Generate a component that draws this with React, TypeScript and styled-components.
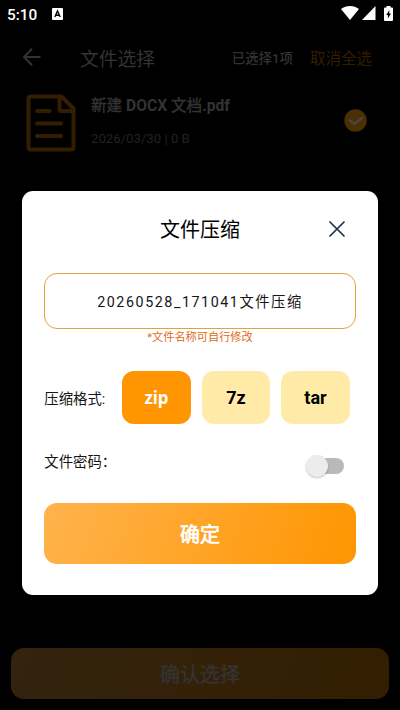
import React from 'react';
import styled, { createGlobalStyle } from 'styled-components';

const Global = createGlobalStyle`
  * { box-sizing: border-box; }
  body { margin: 0; background: #000; }
  button { border: 0; padding: 0; background: none; font: inherit; color: inherit; cursor: pointer; }
`;

const Screen = styled.div`
  position: relative;
  display: flex;
  flex-direction: column;
  width: 400px;
  height: 710px;
  overflow: hidden;
  background: #000;
  font-family: Roboto, 'Noto Sans CJK SC', sans-serif;
  white-space: nowrap;
`;

const StatusBar = styled.div`
  display: flex;
  align-items: center;
  height: 28px;
  padding: 0 7px;
  color: #fff;
`;

const Clock = styled.span`
  width: 45px;
  padding-top: 1px;
  font-size: 15.3px;
  font-weight: 500;
  line-height: 26px;
`;

const StatusIcons = styled.div`
  display: flex;
  align-items: center;
  gap: 3px;
  height: 14px;
  margin: -2px 0 0 auto;
`;

const BatterySlot = styled.span`
  display: flex;
  margin-left: 5px;
`;

const Toolbar = styled.header`
  display: flex;
  align-items: center;
  height: 58px;
  margin-bottom: 2px;
  padding: 0 28px 0 21.5px;
  color: #333;
`;

const PageTitle = styled.h1`
  margin: 0 auto 0 38.5px;
  font-size: 18.8px;
  font-weight: 400;
`;

const SelectedCount = styled.span`
  margin-right: 17px;
  font-size: 13.4px;
  font-weight: 500;
`;

const ClearAll = styled.button`
  && { font-size: 15.5px; color: #331e00; }
`;

const FileRow = styled.div`
  display: flex;
  align-items: flex-start;
  height: 100px;
  padding: 6px 33px 0 26px;
`;

const FileInfo = styled.div`
  display: flex;
  flex-direction: column;
  flex: 1;
  gap: 11px;
  margin-left: 15px;
`;

const FileName = styled.span`
  height: 24px;
  font-size: 15.6px;
  font-weight: 400;
  line-height: 24px;
  color: #333;
  -webkit-text-stroke: 0.4px #333;

  b { font-weight: 700; -webkit-text-stroke: 0; }
`;

const FileMeta = styled.span`
  font-size: 13.2px;
  line-height: 20px;
  color: #222;
`;

const CheckSlot = styled.div`
  display: flex;
  padding-top: 15px;
`;

const SelectButton = styled.button`
  && {
    height: 51px;
    margin: auto 11px 11px;
    border-radius: 13px;
    background: linear-gradient(110deg, #33230f, #331e00);
    color: #333;
    font-size: 20px;
    font-weight: 400;
    -webkit-text-stroke: 0.5px #333;
  }
`;

const Overlay = styled.div`
  position: absolute;
  inset: 28px 0 0;
  display: flex;
  align-items: flex-start;
  justify-content: center;
  padding-top: 163px;
`;

const Dialog = styled.section`
  display: flex;
  flex-direction: column;
  width: 355.5px;
  height: 404px;
  padding: 0 22px;
  border-radius: 11px;
  background: #fff;
  color: #151515;
`;

const DialogHeader = styled.div`
  display: grid;
  grid-template-columns: 1fr auto 1fr;
  align-items: center;
  height: 82px;
`;

const DialogTitle = styled.h2`
  grid-column: 2;
  margin: 0;
  padding-bottom: 7px;
  font-size: 20px;
  font-weight: 400;
  color: #000;
`;

const CloseButton = styled.button`
  && {
    display: flex;
    justify-self: end;
    margin: 0 11px 6px 0;
  }
`;

const NameField = styled.input`
  width: 100%;
  height: 56px;
  padding: 0 0 1px;
  border: 1.5px solid #e4a23c;
  border-radius: 13px;
  outline: 0;
  background: #fff;
  color: #151515;
  font: 400 14.3px Roboto, 'Noto Sans CJK SC', sans-serif;
  letter-spacing: 1.55px;
  text-align: center;
`;

const Hint = styled.div`
  height: 16px;
  font-size: 11.2px;
  line-height: 17px;
  text-align: center;
  color: #df6a1c;
`;

const FormatRow = styled.div`
  display: flex;
  align-items: center;
  gap: 11px;
  height: 53px;
  margin-top: 26px;
`;

const Label = styled.span`
  width: 67px;
  padding-bottom: 1px;
  font-size: 14.4px;
`;

const FormatButton = styled.button<{ $active?: boolean }>`
  && {
    width: 68.5px;
    height: 53px;
    border-radius: 12px;
    background: ${(p) => (p.$active ? '#ff9500' : '#ffeaa7')};
    color: ${(p) => (p.$active ? '#fff' : '#000')};
    font-family: ${(p) => (p.$active ? "'Noto Sans'" : 'Roboto')}, sans-serif;
    font-size: ${(p) => (p.$active ? '17px' : '18px')};
    font-weight: 700;
  }
`;

const PasswordRow = styled.div`
  display: flex;
  align-items: center;
  justify-content: space-between;
  height: 40px;
  margin-top: 18px;
  padding: 0 12px 0 0;

  ${Label} { padding-bottom: 4px; }
`;

const Switch = styled.button`
  && {
    display: flex;
    align-items: center;
    width: 27px;
    height: 16px;
    margin-top: 7px;
    border-radius: 8px;
    background: #b9b9b9;
  }
`;

const Thumb = styled.span`
  flex: none;
  width: 22px;
  height: 22px;
  margin-left: -11px;
  border-radius: 50%;
  background: #ececec;
  box-shadow: 0 1px 2px rgba(0, 0, 0, 0.25);
`;

const ConfirmButton = styled.button`
  && {
    height: 61px;
    margin-top: 21px;
    border-radius: 13px;
    background: linear-gradient(110deg, #ffb34d, #ff9500);
    color: #fff;
    font-size: 20px;
    font-weight: 400;
    -webkit-text-stroke: 0.7px #fff;
  }
`;

const KeyboardIcon = () => (
  <svg width="11" height="12" viewBox="0 0 11 12">
    <rect width="11" height="12" rx="1" fill="#fff" />
    <path d="M2.8 9 5.5 3 8.2 9M3.8 7.3h3.4" fill="none" stroke="#000" strokeWidth="1.4" />
  </svg>
);

const WifiIcon = () => (
  <svg width="18" height="14" viewBox="0 0 17 14" preserveAspectRatio="none">
    <path d="M0 3C4.8-.9 12.2-.9 17 3L8.5 14Z" fill="#fff" />
  </svg>
);

const SignalIcon = () => (
  <svg width="14" height="14" viewBox="0 0 14 14">
    <path d="M13.500 0v14H0Z" fill="#fff" />
  </svg>
);

const BatteryIcon = () => (
  <svg width="9" height="15" viewBox="0 0 9 15">
    <path d="M2.5 0h4v1.500H8q1 0 1 1V14q0 1-1 1H1q-1 0-1-1V2.500q0-1 1-1h1.500Z" fill="#fff" />
    <path d="M5.400 4 2.200 9h1.700v3.600L7 7.600H5.200Z" fill="#000" />
  </svg>
);

const BackIcon = () => (
  <svg width="20" height="20" viewBox="0 0 20 20" fill="none" stroke="#333" strokeWidth="2">
    <path d="M18.500 10H2M10 1.700 2 10l8 8.300" />
  </svg>
);

const FileIcon = () => (
  <svg width="50" height="58" viewBox="0 0 50 58" fill="none" stroke="#331e00" strokeWidth="4" strokeLinecap="round" strokeLinejoin="round">
    <path d="M35.500 2.500H5Q2.500 2.500 2.500 5v48q0 2.500 2.500 2.500h40q2.500 0 2.500-2.500V14.500ZM33.500 3v12.500q0 1.500 1.500 1.500h12" />
    <path d="M11 17h12.500M11 29.500h24M11 42h24" />
  </svg>
);

const CheckIcon = () => (
  <svg width="23" height="23" viewBox="0 0 23 23">
    <circle cx="11.500" cy="11.500" r="11.200" fill="#4b2f05" />
    <path d="m5 10.800 5 4.200L19 8.500" fill="none" stroke="#494643" strokeWidth="2.500" />
  </svg>
);

const CloseIcon = () => (
  <svg width="16" height="16" viewBox="0 0 16 16" fill="none" stroke="#1e3154" strokeWidth="1.700" strokeLinecap="round">
    <path d="m1 1 14 14M15 1 1 15" />
  </svg>
);

export default function App() {
  return (
    <>
      <Global />
      <Screen>
        <StatusBar>
          <Clock>5:10</Clock>
          <KeyboardIcon />
          <StatusIcons>
            <WifiIcon />
            <SignalIcon />
            <BatterySlot>
              <BatteryIcon />
            </BatterySlot>
          </StatusIcons>
        </StatusBar>
        <Toolbar>
          <BackIcon />
          <PageTitle>文件选择</PageTitle>
          <SelectedCount>已选择1项</SelectedCount>
          <ClearAll>取消全选</ClearAll>
        </Toolbar>
        <FileRow>
          <FileIcon />
          <FileInfo>
            <FileName>新建 <b>DOCX</b> 文档<b>.pdf</b></FileName>
            <FileMeta>2026/03/30 | 0 B</FileMeta>
          </FileInfo>
          <CheckSlot>
            <CheckIcon />
          </CheckSlot>
        </FileRow>
        <SelectButton>确认选择</SelectButton>
        <Overlay>
          <Dialog role="dialog">
            <DialogHeader>
              <DialogTitle>文件压缩</DialogTitle>
              <CloseButton>
                <CloseIcon />
              </CloseButton>
            </DialogHeader>
            <NameField defaultValue="20260528_171041文件压缩" />
            <Hint>*文件名称可自行修改</Hint>
            <FormatRow>
              <Label>压缩格式:</Label>
              <FormatButton $active>zip</FormatButton>
              <FormatButton>7z</FormatButton>
              <FormatButton>tar</FormatButton>
            </FormatRow>
            <PasswordRow>
              <Label>文件密码：</Label>
              <Switch role="switch" aria-checked={false}>
                <Thumb />
              </Switch>
            </PasswordRow>
            <ConfirmButton>确定</ConfirmButton>
          </Dialog>
        </Overlay>
      </Screen>
    </>
  );
}
